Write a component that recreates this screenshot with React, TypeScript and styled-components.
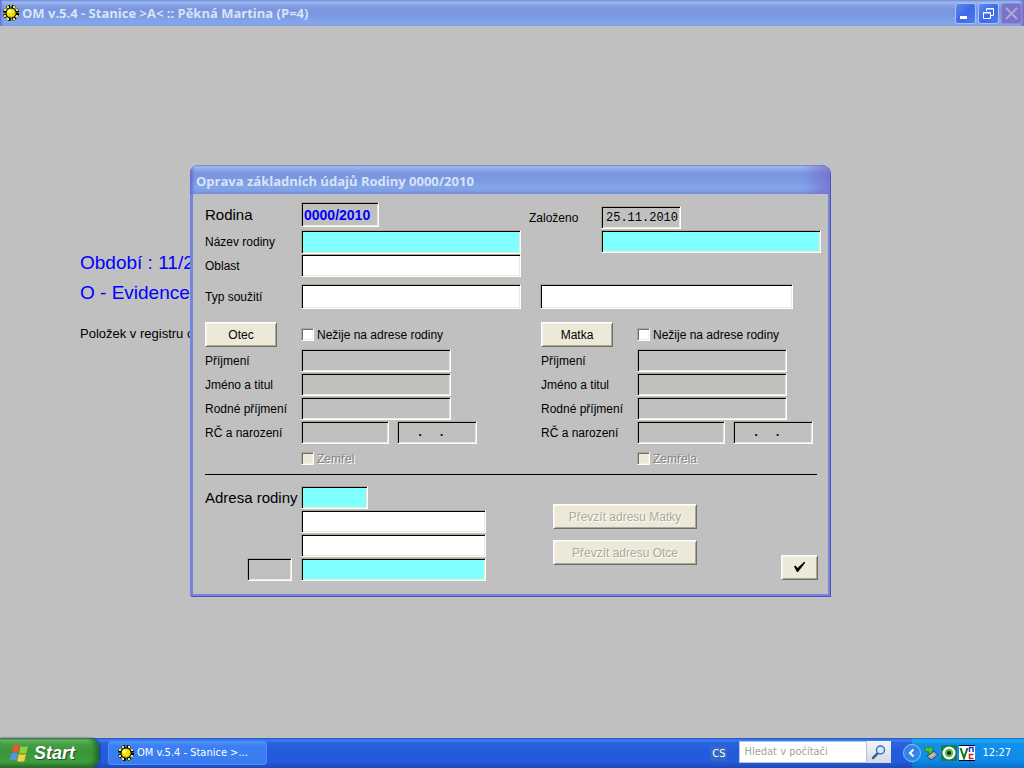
import React, { useId } from "react";
import styled, { createGlobalStyle } from "styled-components";

const GlobalStyle = createGlobalStyle`
  *, *::before, *::after { box-sizing: border-box; }
  body { margin: 0; background: #c0c0c0; }
  button, input { font: inherit; color: inherit; margin: 0; }
`;

const labelFont = `"Liberation Sans", Arial, sans-serif`;
const captionFont = `"Open Sans", "Trebuchet MS", sans-serif`;
const shellFont = `"DejaVu Sans Condensed", "DejaVu Sans", Tahoma, sans-serif`;

const Screen = styled.div`
  display: flex;
  flex-direction: column;
  min-height: 100vh;
  overflow: hidden;
  background: #c0c0c0;
  font: 13px/16px ${labelFont};
  color: #000;
`;

const captionGradient = `linear-gradient(
  to bottom,
  #6a88dc 0,
  #9db8ee 2px,
  #8aa5e6 5px,
  #7a96df 9px,
  #7b98e1 15px,
  #82a6e9 22px,
  #7f9fe6 26px,
  #748ade 100%
)`;

const AppBar = styled.header`
  display: flex;
  align-items: center;
  gap: 3px;
  height: 26px;
  padding: 0 2px 0 3px;
  background:
    linear-gradient(to left, #7565cb 0, transparent 4px),
    linear-gradient(to right, #6a66d0 0, transparent 3px),
    ${captionGradient};
`;

const Caption = styled.h1`
  margin: 0;
  font: bold 13px/20px ${captionFont};
  color: #d8e4f8;
  white-space: nowrap;
`;

const WindowButtons = styled.div`
  display: flex;
  gap: 2px;
  margin-left: auto;
`;

const WindowButton = styled.button<{ $inactive?: boolean }>`
  display: grid;
  place-items: center;
  width: 21px;
  height: 21px;
  padding: 0;
  border: 1px solid ${(p) => (p.$inactive ? "#8d8cd6" : "#a9c0f4")};
  border-radius: 3px;
  background: ${(p) =>
    p.$inactive ? "#7a73c6" : "linear-gradient(135deg, #5d8af0, #3e6ae6 50%, #4a7af0)"};
`;

const Desktop = styled.main`
  position: relative;
  flex: 1;
  min-height: 590px;
  padding: 222px 0 0 80px;
`;

const Heading = styled.p`
  margin: 0;
  font-size: 19px;
  line-height: 30px;
  color: #00f;
`;

const Summary = styled.p`
  margin: 18px 0 0;
  font-size: 13px;
  line-height: 16px;
`;

const Dialog = styled.section`
  position: absolute;
  left: 190px;
  top: 139px;
  width: 640px;
  background: #c0c0c0;
  border: solid #7086df;
  border-width: 0 2px 2px 3px;
  border-radius: 8px 8px 0 0;
  box-shadow: 1px 1px #5450b8;
`;

const DialogBar = styled.header`
  display: flex;
  align-items: center;
  height: 29px;
  margin: 0 -2px 0 -3px;
  padding: 3px 6px 0;
  border-radius: 8px 8px 0 0;
  background:
    linear-gradient(to left, #7565cbb0 0, transparent 28px),
    linear-gradient(to right, #6a66d0 0, transparent 5px),
    ${captionGradient};
`;

const Form = styled.form`
  padding: 8px 7px 13px 12px;
`;

const Split = styled.div`
  display: flex;
`;

const Basics = styled.div`
  width: 324px;
`;

const Founded = styled.div`
  padding-top: 4px;
`;

const FieldRow = styled.div<{ $top?: number }>`
  display: flex;
  align-items: center;
  margin-top: ${(p) => p.$top ?? 0}px;
`;

const Label = styled.label<{ $width?: number; $large?: boolean }>`
  flex: none;
  width: ${(p) => p.$width ?? 96}px;
  font-size: ${(p) => (p.$large ? 15 : 12)}px;
  white-space: nowrap;
`;

const fills = { white: "#fff", cyan: "#80ffff", none: "#c0c0c0" };

const Field = styled.input<{
  $width: number;
  $height?: number;
  $fill?: keyof typeof fills;
  $left?: number;
}>`
  flex: none;
  width: ${(p) => p.$width}px;
  height: ${(p) => p.$height ?? 23}px;
  margin-left: ${(p) => p.$left ?? 0}px;
  padding: 0 0 0 4px;
  border: 1px solid;
  border-color: #aca899 #fff #fff #aca899;
  border-radius: 0;
  outline: 0;
  background: ${(p) => fills[p.$fill ?? "none"]};
  box-shadow: inset 1px 1px #000, inset -1px -1px #ece9d8;
  font: 12px/16px "Liberation Mono", "Courier New", monospace;
`;

const NumberField = styled(Field)`
  padding: 0 2px;
  font: bold 14px/18px ${labelFont};
  color: #00f;
`;

const BirthField = styled(Field)`
  font-weight: bold;
`;

const RightOfField = styled.div`
  display: flex;
  justify-content: flex-end;
  width: 96px;
  padding-right: 9px;
`;

const Parents = styled.div`
  display: grid;
  grid-template-columns: 336px 1fr;
  margin-top: 13px;
`;

const ParentFields = styled.div`
  display: grid;
  gap: 1px;
  margin: 2px 0 8px;
`;

const Button = styled.button<{ $width: number }>`
  flex: none;
  width: ${(p) => p.$width}px;
  height: 25px;
  padding: 0;
  border: 1px solid;
  border-color: #fff #716f64 #716f64 #fff;
  background: #ece9d8;
  box-shadow: inset 1px 1px #f7f5ec, inset -1px -1px #aca899;
  font: 12px/16px ${labelFont};
  &:disabled {
    color: #aca899;
    text-shadow: 1px 1px #fff;
  }
`;

const CheckLabel = styled.label<{ $left: number; $muted?: boolean }>`
  display: flex;
  align-items: center;
  gap: 3px;
  height: 13px;
  margin-left: ${(p) => p.$left}px;
  font-size: 12px;
  white-space: nowrap;
  color: ${(p) => (p.$muted ? "#868686" : "#000")};
  text-shadow: ${(p) => (p.$muted ? "1px 1px #fff" : "none")};
`;

const CheckBox = styled.input`
  appearance: none;
  width: 13px;
  height: 13px;
  border: 1px solid;
  border-color: #aca899 #fff #fff #aca899;
  background: #fff;
  box-shadow: inset 1px 1px #716f64, inset -1px -1px #f1efe2;
  &:disabled { background: #ece9d8; }
`;

const Divider = styled.hr`
  height: 1px;
  margin: 9px 4px 11px 0;
  border: 0;
  background: #000;
`;

const AddressFields = styled.div`
  display: grid;
  gap: 1px;
`;

const CopyButtons = styled.div`
  display: flex;
  flex-direction: column;
  gap: 11px;
  margin-left: 67px;
  padding-top: 18px;
`;

const Confirm = styled.div`
  align-self: flex-end;
  margin: 0 3px 1px auto;
`;

const Taskbar = styled.footer`
  display: flex;
  align-items: stretch;
  height: 30px;
  background: linear-gradient(
    to bottom, #1f4fc0 0, #3f80ee 2px, #2a63e0 5px, #245bdc 12px, #245bdc 24px, #1d48b8 100%
  );
  font: 11px/14px ${shellFont};
  color: #fff;
`;

const StartButton = styled.button`
  display: flex;
  align-items: center;
  gap: 5px;
  width: 99px;
  padding: 0 0 0 9px;
  border: 0;
  border-radius: 0 9px 9px 0;
  background: linear-gradient(
    to bottom, #2f7a2f 0, #6cb66a 2px, #44a043 6px, #3a953a 14px, #3f9f3f 24px, #2a7029 100%
  );
  box-shadow: inset -4px -1px 5px #256b25, 1px 0 2px #14389c;
  font: italic bold 18px/24px ${labelFont};
  color: #fff;
  text-shadow: 1px 1px 1px #1f4d1f;
`;

const TaskButton = styled.button`
  display: flex;
  align-items: center;
  gap: 3px;
  width: 159px;
  margin: 3px 0 3px 9px;
  padding: 0 0 0 9px;
  border: 1px solid #4f8ff8;
  border-radius: 3px;
  background: linear-gradient(to bottom, #4d8ff8 0, #3b7ff2 4px, #3a7cf0 100%);
  white-space: nowrap;
`;

const Language = styled.span`
  align-self: center;
  margin-left: auto;
  padding: 1px 2px 0;
  background: #316ac5;
`;

const Search = styled.div`
  display: flex;
  margin: 3px 21px 5px 12px;
`;

const SearchBox = styled.input`
  width: 128px;
  padding: 0 4px;
  border: 1px solid #b8c4dc;
  border-radius: 0;
  background: #fff;
  &::placeholder { color: #a5a293; opacity: 1; }
`;

const SearchButton = styled.button`
  display: grid;
  place-items: center;
  width: 24px;
  padding: 0;
  border: 0;
  background: linear-gradient(to bottom, #f4f5f8, #d5d9e4);
`;

const Tray = styled.div`
  display: flex;
  align-items: center;
  gap: 2px;
  padding-right: 13px;
  background: linear-gradient(
    to bottom, #0d6fc8 0, #1fa6f4 2px, #1290e8 6px, #0f8bea 22px, #0c6cc4 100%
  );
`;

const Expand = styled.button`
  display: grid;
  width: 18px;
  margin-left: -9px;
  padding: 0;
  border: 0;
  background: none;
`;

const Clock = styled.time`
  margin-left: 5px;
`;

function SunIcon() {
  return (
    <svg width="16" height="16" viewBox="0 0 16 16" aria-hidden="true">
      <circle cx="8" cy="8" r="6.500" fill="none" stroke="#000" strokeWidth="3" strokeDasharray="3.400 1.700" />
      <g fill="#ffef00">
        <path d="M4 1h2v2H4zM10 1h2v2h-2zM13 4h2v2h-2zM13 10h2v2h-2zM10 13h2v2h-2zM4 13h2v2H4zM1 10h2v2H1zM1 4h2v2H1z" />
      </g>
      <circle cx="8" cy="8" r="5" fill="#f4e400" stroke="#000" />
      <path d="M12 7a4 4 0 0 1-6 4.500" fill="none" stroke="#b8a800" />
      <circle cx="6.500" cy="6.500" r="1.800" fill="#fffcb0" />
    </svg>
  );
}

function FlagIcon() {
  return (
    <svg width="20" height="20" viewBox="0 0 20 20" aria-hidden="true">
      <path d="M4.500 2.500q3-2 6 0l-1.500 7q-3-1.800-6 0z" fill="#f0562b" />
      <path d="M11.500 3q3 1.500 7.500 0l-1.700 7q-4 1.500-7.300 0z" fill="#8ccf3f" />
      <path d="M2.700 10.500q3-1.800 6 0l-1.500 7q-3-2-6.500 0z" fill="#5d8fee" />
      <path d="M9.700 11q3 1.600 7.300 0l-1.600 7q-4 1.500-7.200 0z" fill="#fbcf3a" />
    </svg>
  );
}

function UsbIcon() {
  return (
    <svg width="16" height="16" viewBox="0 0 16 16" aria-hidden="true">
      <path d="M4 11 11 6l4 4-7 5z" fill="#9aa4a8" stroke="#3c464c" />
      <path d="M7 12l4-3" stroke="#e8ecee" />
      <path d="M2 2l4 1 1-2 3 3-1 4-4 1 1-2-4-1z" fill="#4cc23c" stroke="#1e7418" strokeWidth=".6" />
    </svg>
  );
}

function EyeIcon() {
  return (
    <svg width="16" height="16" viewBox="0 0 16 16" aria-hidden="true">
      <rect width="16" height="16" rx="1" fill="#1d7a4c" />
      <circle cx="8" cy="8" r="6.500" fill="#fff" />
      <circle cx="8" cy="8" r="4.200" fill="#5ab83c" />
      <circle cx="8" cy="8" r="2" fill="#10281a" />
    </svg>
  );
}

function VncIcon() {
  return (
    <svg width="16" height="16" viewBox="0 0 16 16" aria-hidden="true">
      <rect width="16" height="16" fill="#fff" />
      <path d="M0 .5h16M0 15.500h16" stroke="#000" />
      <path d="M1.500 3 5 13 8.500 3" fill="none" stroke="#0a7a1c" strokeWidth="2" />
      <path d="M10.500 7V2.500h3.500V7" fill="none" stroke="#1c2cd8" strokeWidth="1.500" />
      <path d="M14.500 9.500h-4v4h4" fill="none" stroke="#e01818" strokeWidth="1.500" />
    </svg>
  );
}

type ParentProps = { title: string; deceased: string };

function Parent({ title, deceased }: ParentProps) {
  const id = useId();
  return (
    <div>
      <FieldRow>
        <Button type="button" $width={72}>{title}</Button>
        <CheckLabel $left={24}>
          <CheckBox type="checkbox" />
          Nežije na adrese rodiny
        </CheckLabel>
      </FieldRow>
      <ParentFields>
        {["Příjmení", "Jméno a titul", "Rodné příjmení"].map((name) => (
          <FieldRow key={name}>
            <Label htmlFor={id + name}>{name}</Label>
            <Field id={id + name} $width={150} readOnly />
          </FieldRow>
        ))}
        <FieldRow>
          <Label htmlFor={id + "rc"}>RČ a narození</Label>
          <Field id={id + "rc"} $width={88} readOnly />
          <BirthField aria-label="Datum narození" $width={80} $left={8} defaultValue="  .  ." readOnly />
        </FieldRow>
      </ParentFields>
      <CheckLabel $left={96} $muted>
        <CheckBox type="checkbox" disabled />
        {deceased}
      </CheckLabel>
    </div>
  );
}

export default function App() {
  return (
    <>
      <GlobalStyle />
      <Screen>
        <AppBar>
          <SunIcon />
          <Caption>OM v.5.4 - Stanice &gt;A&lt; :: Pěkná Martina (P=4)</Caption>
          <WindowButtons>
            <WindowButton aria-label="Minimalizovat">
              <svg width="19" height="19" aria-hidden="true">
                <path d="M4 13.500h7" stroke="#fff" strokeWidth="3" />
              </svg>
            </WindowButton>
            <WindowButton aria-label="Obnovit">
              <svg width="19" height="19" fill="none" stroke="#fff" aria-hidden="true">
                <path d="M7.500 7V4.500h7v7H12M7 5h8" />
                <path d="M4.500 8.500h7v6h-7zM4 9h8" />
              </svg>
            </WindowButton>
            <WindowButton aria-label="Zavřít" $inactive>
              <svg width="19" height="19" aria-hidden="true">
                <path d="M4 4l11 11M15 4l-11 11" stroke="#aaa9dc" strokeWidth="2" />
              </svg>
            </WindowButton>
          </WindowButtons>
        </AppBar>

        <Desktop>
          <Heading>Období : 11/2</Heading>
          <Heading>O - Evidence</Heading>
          <Summary>Položek v registru o</Summary>

          <Dialog role="dialog" aria-labelledby="dialog-title">
            <DialogBar>
              <Caption as="h2" id="dialog-title">Oprava základních údajů Rodiny 0000/2010</Caption>
            </DialogBar>
            <Form onSubmit={(e) => e.preventDefault()}>
              <Split>
                <Basics>
                  <FieldRow>
                    <Label htmlFor="family" $large>Rodina</Label>
                    <NumberField id="family" $width={78} $height={25} defaultValue="0000/2010" readOnly />
                  </FieldRow>
                  <FieldRow $top={3}>
                    <Label htmlFor="name">Název rodiny</Label>
                    <Field id="name" $width={220} $height={24} $fill="cyan" />
                  </FieldRow>
                  <FieldRow>
                    <Label htmlFor="area">Oblast</Label>
                    <Field id="area" $width={220} $fill="white" />
                  </FieldRow>
                </Basics>
                <Founded>
                  <FieldRow>
                    <Label htmlFor="founded" $width={72}>Založeno</Label>
                    <Field id="founded" $width={80} defaultValue="25.11.2010" readOnly />
                  </FieldRow>
                  <FieldRow $top={1}>
                    <Field aria-label="Doplněk názvu" $width={220} $left={72} $fill="cyan" />
                  </FieldRow>
                </Founded>
              </Split>
              <FieldRow $top={7}>
                <Label htmlFor="union">Typ soužití</Label>
                <Field id="union" $width={220} $height={25} $fill="white" />
                <Field aria-label="Popis soužití" $width={253} $height={25} $left={19} $fill="white" />
              </FieldRow>

              <Parents>
                <Parent title="Otec" deceased="Zemřel" />
                <Parent title="Matka" deceased="Zemřela" />
              </Parents>

              <Divider />

              <Split>
                <AddressFields>
                  <FieldRow>
                    <Label htmlFor="address" $large>Adresa rodiny</Label>
                    <Field id="address" $width={67} $fill="cyan" />
                  </FieldRow>
                  <FieldRow>
                    <Field aria-label="Ulice" $width={185} $left={96} $fill="white" />
                  </FieldRow>
                  <FieldRow>
                    <Field aria-label="Obec" $width={185} $left={96} $fill="white" />
                  </FieldRow>
                  <FieldRow>
                    <RightOfField>
                      <Field aria-label="PSČ" $width={45} readOnly />
                    </RightOfField>
                    <Field aria-label="Pošta" $width={185} $fill="cyan" />
                  </FieldRow>
                </AddressFields>
                <CopyButtons>
                  <Button type="button" $width={144} disabled>Převzít adresu Matky</Button>
                  <Button type="button" $width={144} disabled>Převzít adresu Otce</Button>
                </CopyButtons>
                <Confirm>
                  <Button type="submit" $width={37} aria-label="Potvrdit">
                    <svg width="13" height="12" viewBox="0 0 13 12" aria-hidden="true">
                      <path d="M1 6.500 2.500 5.500 4.500 8 11 2h1v1L5 12H4z" />
                    </svg>
                  </Button>
                </Confirm>
              </Split>
            </Form>
          </Dialog>
        </Desktop>

        <Taskbar>
          <StartButton>
            <FlagIcon />
            Start
          </StartButton>
          <TaskButton>
            <SunIcon />
            OM v.5.4 - Stanice &gt;...
          </TaskButton>
          <Language>CS</Language>
          <Search>
            <SearchBox aria-label="Hledat v počítači" placeholder="Hledat v počítači" />
            <SearchButton aria-label="Hledat">
              <svg width="16" height="16" viewBox="0 0 16 16" aria-hidden="true">
                <path d="M2 14l4.500-4.500" stroke="#3a5ea8" strokeWidth="2.500" strokeLinecap="round" />
                <circle cx="9.500" cy="6" r="4" fill="#d8ecff" stroke="#3f6fc0" strokeWidth="1.500" />
              </svg>
            </SearchButton>
          </Search>
          <Tray>
            <Expand aria-label="Zobrazit skryté ikony">
              <svg width="18" height="18" viewBox="0 0 18 18" aria-hidden="true">
                <circle cx="9" cy="9" r="8.500" fill="#2f86e8" stroke="#8fc0f4" />
                <path d="M10.500 5.500 7 9l3.500 3.500" fill="none" stroke="#fff" strokeWidth="2" />
              </svg>
            </Expand>
            <UsbIcon />
            <EyeIcon />
            <VncIcon />
            <Clock>12:27</Clock>
          </Tray>
        </Taskbar>
      </Screen>
    </>
  );
}
